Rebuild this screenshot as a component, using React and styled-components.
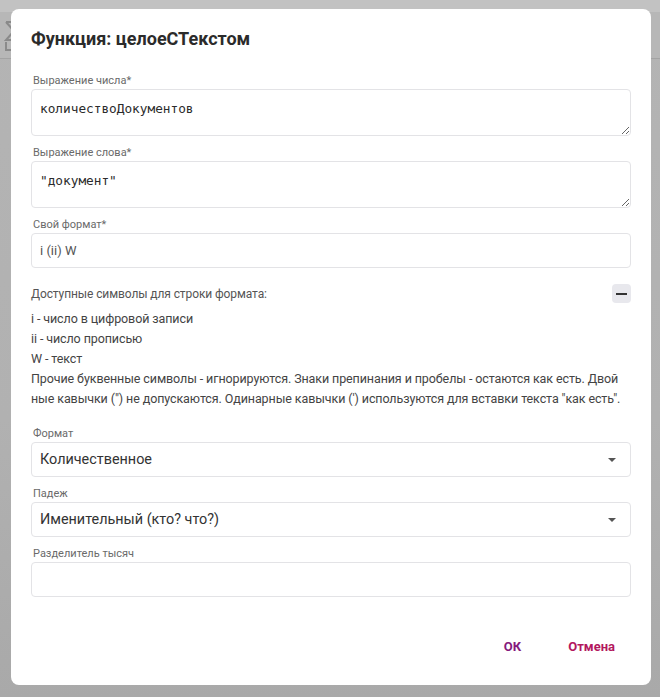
import styled, { createGlobalStyle } from 'styled-components';

const GlobalStyle = createGlobalStyle`
  html, body {
    margin: 0;
    padding: 0;
    height: 100%;
  }
  body {
    font-family: Roboto, "Noto Sans", sans-serif;
    background: #b2b2b2;
    overflow: hidden;
  }
`;

const Backdrop = styled.div`
  position: fixed;
  inset: 0;
  display: flex;
  flex-direction: column;
  background: linear-gradient(180deg, #b4b4b4 0%, #b1b1b1 60%, #a9a9a9 100%);
`;

const TopStrip = styled.div`
  height: 12px;
  background: #c2c2c2;
`;

const AppBar = styled.div`
  height: 46px;
  background: #b7b7b7;
  border-bottom: 1px solid #a3a3a3;
  display: flex;
  align-items: center;
  padding-left: 4px;
`;

const Overlay = styled.div`
  position: fixed;
  inset: 0;
  padding: 9px 0 0 11px;
`;

const Dialog = styled.div`
  width: 640px;
  height: 676px;
  box-sizing: border-box;
  background: #fff;
  border-radius: 8px;
  padding: 18px 20px 0;
  display: flex;
  flex-direction: column;
`;

const Title = styled.h2`
  margin: 0 0 23px;
  font-size: 18px;
  line-height: 24px;
  font-weight: 700;
  color: #2b2b2b;
`;

const Field = styled.div`
  display: flex;
  flex-direction: column;
  margin-bottom: ${(p) => p.$gap ?? 10}px;
`;

const Label = styled.label`
  font-size: 11px;
  line-height: 14px;
  color: #6a6a6a;
  padding-left: 2px;
  margin-bottom: 1px;
`;

const Area = styled.textarea`
  height: 47px;
  box-sizing: border-box;
  border: 1px solid #e3e3e6;
  border-radius: 4px;
  padding: 11px 8px;
  font-family: "DejaVu Sans Mono", "Liberation Mono", monospace;
  font-size: 12.75px;
  line-height: 16px;
  color: #2b2b2b;
  resize: vertical;
  outline: none;
`;

const Input = styled.input`
  height: 35px;
  box-sizing: border-box;
  border: 1px solid #e3e3e6;
  border-radius: 4px;
  padding: 0 8px;
  font-family: Roboto, sans-serif;
  font-size: 13px;
  color: #555;
  outline: none;
`;

const Select = styled.div`
  height: 35px;
  box-sizing: border-box;
  border: 1px solid #e3e3e6;
  border-radius: 4px;
  padding: 0 14px 0 8px;
  display: flex;
  align-items: center;
  justify-content: space-between;
  font-size: 14.4px;
  color: #333;
`;

const Caret = styled.span`
  width: 0;
  height: 0;
  border-left: 4px solid transparent;
  border-right: 4px solid transparent;
  border-top: 4px solid #555;
`;

const HelpHead = styled.div`
  display: flex;
  align-items: center;
  justify-content: space-between;
  margin-top: 15px;
  height: 21px;
  font-size: 12px;
  letter-spacing: -0.1px;
  color: #555;
`;

const Toggle = styled.button`
  width: 19px;
  height: 19px;
  border: none;
  border-radius: 4px;
  background: #e8e8ed;
  padding: 0;
  display: flex;
  align-items: center;
  justify-content: center;
  &::before {
    content: '';
    width: 11px;
    height: 2px;
    background: #333;
  }
`;

const HelpBody = styled.div`
  margin-top: 5px;
  margin-bottom: 18px;
  font-size: 12.5px;
  letter-spacing: -0.1px;
  line-height: 20px;
  color: #444;
`;

const HelpLine = styled.div`
  white-space: nowrap;
`;

const Footer = styled.div`
  margin-top: auto;
  height: 78px;
  display: flex;
  justify-content: flex-end;
  align-items: center;
  gap: 15px;
`;

const TextButton = styled.button`
  border: none;
  background: none;
  padding: 0 16px;
  height: 26px;
  font-family: Roboto, sans-serif;
  font-weight: 700;
  font-size: 13px;
  color: ${(p) => p.$color};
  cursor: pointer;
`;

export default function App() {
  return (
    <>
      <GlobalStyle />
      <Backdrop>
        <TopStrip />
        <AppBar>
          <svg width="18" height="34" viewBox="0 0 18 34">
            <path d="M2 4h12M2 4l8 9-8 9h12" stroke="#8a8a8a" strokeWidth="2" fill="none" />
            <path d="M2 24v8h12" stroke="#8a8a8a" strokeWidth="2" fill="none" />
          </svg>
        </AppBar>
      </Backdrop>
      <Overlay>
        <Dialog>
          <Title>Функция: целоеСТекстом</Title>
          <Field>
            <Label>Выражение числа*</Label>
            <Area defaultValue="количествоДокументов" />
          </Field>
          <Field>
            <Label>Выражение слова*</Label>
            <Area defaultValue={'"документ"'} />
          </Field>
          <Field $gap={0}>
            <Label>Свой формат*</Label>
            <Input defaultValue="i (ii) W" />
          </Field>
          <HelpHead>
            <span>Доступные символы для строки формата:</span>
            <Toggle aria-label="Свернуть" />
          </HelpHead>
          <HelpBody>
            <HelpLine>i - число в цифровой записи</HelpLine>
            <HelpLine>ii - число прописью</HelpLine>
            <HelpLine>W - текст</HelpLine>
            <HelpLine>Прочие буквенные символы - игнорируются. Знаки препинания и пробелы - остаются как есть. Двой</HelpLine>
            <HelpLine>ные кавычки (") не допускаются. Одинарные кавычки (') используются для вставки текста "как есть".</HelpLine>
          </HelpBody>
          <Field>
            <Label>Формат</Label>
            <Select>
              <span>Количественное</span>
              <Caret />
            </Select>
          </Field>
          <Field>
            <Label>Падеж</Label>
            <Select>
              <span>Именительный (кто? что?)</span>
              <Caret />
            </Select>
          </Field>
          <Field>
            <Label>Разделитель тысяч</Label>
            <Input defaultValue="" />
          </Field>
          <Footer>
            <TextButton $color="#861a7d">ОК</TextButton>
            <TextButton $color="#b3175e">Отмена</TextButton>
          </Footer>
        </Dialog>
      </Overlay>
    </>
  );
}
